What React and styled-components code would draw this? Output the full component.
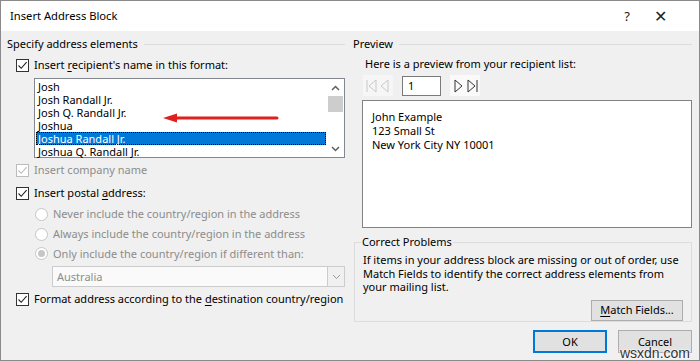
import React from "react";
import styled, { createGlobalStyle } from "styled-components";

const Global = createGlobalStyle`
  html, body { margin: 0; padding: 0; background: #fff; }
  body { font-family: "Noto Sans", "Open Sans", sans-serif; font-size: 11px; line-height: 14px; color: #000; }
  * { box-sizing: border-box; }
`;

const Window = styled.div`
  position: relative;
  width: 700px;
  height: 361px;
  border: 1px solid #8a8a8a;
  background: #f0f0f0;
  display: flex;
  flex-direction: column;
  overflow: hidden;
`;

const TitleBar = styled.div`
  height: 30px;
  background: #fff;
  display: flex;
  align-items: center;
  padding-left: 9px;
  padding-right: 16px;
  font-size: 11.2px;
`;

const TitleText = styled.div`
  flex: 1;
`;

const TitleBtn = styled.div`
  width: ${(p) => p.$w}px;
  text-align: center;
  font-size: ${(p) => p.$fs}px;
  color: #222;
`;

const Body = styled.div`
  flex: 1;
  display: grid;
  grid-template-columns: 338px 339px;
  column-gap: 8px;
  padding: 5px 6px 0 6px;
`;

const Column = styled.div`
  display: flex;
  flex-direction: column;
`;

const GroupHeader = styled.div`
  display: flex;
  align-items: center;
  height: 16px;
  gap: 6px;
  &::after {
    content: "";
    flex: 1;
    height: 1px;
    background: #dcdcdc;
  }
`;

const Row = styled.div`
  display: flex;
  align-items: center;
  height: ${(p) => p.$h || 16}px;
  margin-top: ${(p) => p.$mt || 0}px;
  margin-left: ${(p) => p.$ml || 0}px;
  color: ${(p) => (p.$disabled ? "#8c8c8c" : "#000")};
  gap: 5px;
  white-space: nowrap;
`;

const Box = styled.span`
  width: 13px;
  height: 13px;
  border: 1px solid ${(p) => (p.$disabled ? "#bcbcbc" : "#333")};
  background: #fff;
  display: inline-flex;
  align-items: center;
  justify-content: center;
  flex: none;
`;

const Radio = styled.span`
  width: 13px;
  height: 13px;
  border-radius: 50%;
  border: 1px solid #c6c6c6;
  background: #fff;
  display: inline-flex;
  align-items: center;
  justify-content: center;
  flex: none;
  &::after {
    content: "";
    width: 7px;
    height: 7px;
    border-radius: 50%;
    background: ${(p) => (p.$on ? "#c6c6c6" : "transparent")};
  }
`;

const U = styled.span`
  text-decoration: underline;
  text-underline-offset: 2px;
`;

const Check = ({ disabled }) => (
  <Box $disabled={disabled}>
    <svg width="11" height="11" viewBox="0 0 11 11">
      <path d="M1.5 5.5 L4.2 8.3 L9.6 2.2" fill="none" stroke={disabled ? "#bcbcbc" : "#222"} strokeWidth="1.1" />
    </svg>
  </Box>
);

const ListBox = styled.div`
  margin-top: 5px;
  margin-left: 27px;
  width: 311px;
  height: 80px;
  border: 1px solid #828790;
  background: #fff;
  display: flex;
  position: relative;
`;

const ListItems = styled.div`
  flex: 1;
  padding: 1px 1px;
  display: flex;
  flex-direction: column;
`;

const ListItem = styled.div`
  height: 13px;
  line-height: 13px;
  padding-left: 2px;
  background: ${(p) => (p.$sel ? "#0078d7" : "transparent")};
  color: ${(p) => (p.$sel ? "#fff" : "#000")};
  outline: ${(p) => (p.$sel ? "1px dotted #000" : "none")};
  outline-offset: -1px;
  white-space: nowrap;
`;

const ScrollBar = styled.div`
  width: 17px;
  background: #fff;
  display: flex;
  flex-direction: column;
  align-items: center;
`;

const ScrollArrow = styled.div`
  height: 17px;
  display: flex;
  align-items: center;
  justify-content: center;
`;

const Thumb = styled.div`
  width: 15px;
  height: 16px;
  background: #cdcdcd;
`;

const ScrollTrack = styled.div`
  flex: 1;
  width: 100%;
  display: flex;
  flex-direction: column;
  align-items: center;
`;

const Arrow = styled.div`
  position: absolute;
  left: 128px;
  top: 33px;
  width: 116px;
  height: 10px;
`;

const Combo = styled.div`
  margin-top: 3px;
  margin-left: 45px;
  width: 293px;
  height: 21px;
  border: 1px solid #cccccc;
  background: #fafafa;
  display: flex;
  align-items: center;
  color: #8c8c8c;
`;

const ComboText = styled.div`
  flex: 1;
  padding-left: 4px;
`;

const ComboBtn = styled.div`
  width: 17px;
  height: 100%;
  border-left: 1px solid #cccccc;
  background: #f0f0f0;
  display: flex;
  align-items: center;
  justify-content: center;
`;

const Indent = styled.div`
  margin-left: ${(p) => p.$ml}px;
  margin-top: ${(p) => p.$mt || 0}px;
`;

const Nav = styled.div`
  display: flex;
  align-items: center;
  margin-top: 3px;
  margin-left: 10px;
  height: 21px;
`;

const NavGroup = styled.div`
  width: 30px;
  height: 21px;
  background: ${(p) => (p.$off ? "#f6f6f6" : "#fafafa")};
  display: flex;
  align-items: center;
  justify-content: center;
  margin-right: ${(p) => p.$mr || 0}px;
`;

const NumInput = styled.div`
  width: 39px;
  height: 20px;
  border: 1px solid #7a7a7a;
  background: #fff;
  padding-left: 5px;
  line-height: 18px;
  margin-right: 9px;
`;

const Preview = styled.div`
  margin-top: 4px;
  margin-left: 9px;
  width: 330px;
  height: 128px;
  border: 1px solid #828282;
  background: #fff;
  padding: 9px 9px;
  line-height: 14px;
`;

const ProblemsBox = styled.fieldset`
  margin: 7px 0 0 1px;
  width: 338px;
  height: 87px;
  border: 1px solid #dcdcdc;
  padding: 4px 8px 0 8px;
  display: flex;
  flex-direction: column;
  line-height: 13.5px;
  min-width: 0;
`;

const Legend = styled.legend`
  padding: 0 1px;
  margin-left: -2px;
  line-height: 14px;
`;

const ButtonRow = styled.div`
  display: flex;
  justify-content: flex-end;
  margin-top: ${(p) => p.$mt || 0}px;
  margin-right: ${(p) => p.$mr || 0}px;
  gap: 11px;
`;

const Button = styled.div`
  width: ${(p) => p.$w}px;
  height: ${(p) => p.$h || 22}px;
  border: ${(p) => (p.$def ? "2px solid #0078d7" : "1px solid #adadad")};
  background: #e1e1e1;
  display: flex;
  align-items: center;
  justify-content: center;
`;

const Watermark = styled.div`
  position: absolute;
  right: 9px;
  bottom: 0px;
  font-family: "Liberation Sans", Arial, sans-serif;
  font-size: 14px;
  line-height: 14px;
  color: #333;
  text-shadow: 0 0 2px #fff, 0 0 2px #fff, 0 0 2px #fff;
`;

const Chevron = ({ up }) => (
  <svg width="9" height="6" viewBox="0 0 9 6">
    <path d={up ? "M1 5 L4.5 1.5 L8 5" : "M1 1 L4.5 4.5 L8 1"} fill="none" stroke="#606060" strokeWidth="1.5" />
  </svg>
);

const NavIcon = ({ type, color }) => {
  const paths = {
    first: "M2 1 V13 M11 1 L4 7 L11 13 Z",
    prev: "M10 1 L3 7 L10 13 Z",
    next: "M3 1 L10 7 L3 13 Z",
    last: "M3 1 L10 7 L3 13 Z M12 1 V13",
  };
  return (
    <svg width="13" height="14" viewBox="0 0 13 14">
      <path d={paths[type]} fill="none" stroke={color} strokeWidth="1" />
    </svg>
  );
};

const names = [
  "Josh",
  "Josh Randall Jr.",
  "Josh Q. Randall Jr.",
  "Joshua",
  "Joshua Randall Jr.",
  "Joshua Q. Randall Jr.",
];

export default function App() {
  return (
    <>
      <Global />
      <Window>
        <TitleBar>
          <TitleText>Insert Address Block</TitleText>
          <TitleBtn $w={20} $fs={13}>?</TitleBtn>
          <TitleBtn $w={46} $fs={16}>✕</TitleBtn>
        </TitleBar>
        <Body>
          <Column>
            <GroupHeader>Specify address elements</GroupHeader>
            <Row $mt={5} $ml={9}>
              <Check />
              <span>
                Insert <U>r</U>ecipient's name in this format:
              </span>
            </Row>
            <ListBox>
              <ListItems>
                {names.map((n) => (
                  <ListItem key={n} $sel={n === "Joshua Randall Jr."}>
                    {n}
                  </ListItem>
                ))}
              </ListItems>
              <ScrollBar>
                <ScrollTrack>
                  <ScrollArrow>
                    <Chevron up />
                  </ScrollArrow>
                  <Thumb />
                </ScrollTrack>
                <ScrollArrow>
                  <Chevron />
                </ScrollArrow>
              </ScrollBar>
              <Arrow>
                <svg width="116" height="10" viewBox="0 0 116 10">
                  <path d="M12 5 H114" stroke="#e0201c" strokeWidth="3" strokeLinecap="round" />
                  <path d="M0 5 L14 0.5 L14 9.5 Z" fill="#e0201c" />
                </svg>
              </Arrow>
            </ListBox>
            <Row $mt={4} $ml={9} $disabled>
              <Check disabled />
              <span>Insert company name</span>
            </Row>
            <Row $mt={7} $ml={9}>
              <Check />
              <span>
                Insert postal <U>a</U>ddress:
              </span>
            </Row>
            <Indent $ml={28} $mt={3}>
              <Row $h={20} $disabled>
                <Radio />
                <span>Never include the country/region in the address</span>
              </Row>
              <Row $h={20} $disabled>
                <Radio />
                <span>Always include the country/region in the address</span>
              </Row>
              <Row $h={19} $disabled>
                <Radio $on />
                <span>Only include the country/region if different than:</span>
              </Row>
            </Indent>
            <Combo>
              <ComboText>Australia</ComboText>
              <ComboBtn>
                <svg width="9" height="6" viewBox="0 0 9 6">
                  <path d="M1 1 L4.5 4.5 L8 1" fill="none" stroke="#9a9a9a" strokeWidth="1" />
                </svg>
              </ComboBtn>
            </Combo>
            <Row $mt={4} $ml={9}>
              <Check />
              <span>
                Format address according to the <U>d</U>estination country/region
              </span>
            </Row>
          </Column>
          <Column>
            <GroupHeader>Preview</GroupHeader>
            <Row $mt={4} $ml={12}>
              Here is a preview from your recipient list:
            </Row>
            <Nav>
              <NavGroup $off $mr={9}>
                <NavIcon type="first" color="#c8c8c8" />
                <NavIcon type="prev" color="#c8c8c8" />
              </NavGroup>
              <NumInput>1</NumInput>
              <NavGroup>
                <NavIcon type="next" color="#333" />
                <NavIcon type="last" color="#333" />
              </NavGroup>
            </Nav>
            <Preview>
              <div>John Example</div>
              <div>123 Small St</div>
              <div>New York City NY 10001</div>
            </Preview>
            <ProblemsBox>
              <Legend>Correct Problems</Legend>
              <div>
                If items in your address block are missing or out of order, use Match Fields to identify the correct
                address elements from your mailing list.
              </div>
              <ButtonRow $mt={6} $mr={0}>
                <Button $w={92} $h={21}>
                  <span>
                    <U>M</U>atch Fields...
                  </span>
                </Button>
              </ButtonRow>
            </ProblemsBox>
            <ButtonRow $mt={8}>
              <Button $w={74} $h={23} $def>
                OK
              </Button>
              <Button $w={74} $h={23}>
                Cancel
              </Button>
            </ButtonRow>
          </Column>
        </Body>
        <Watermark>wsxdn.com</Watermark>
      </Window>
    </>
  );
}
